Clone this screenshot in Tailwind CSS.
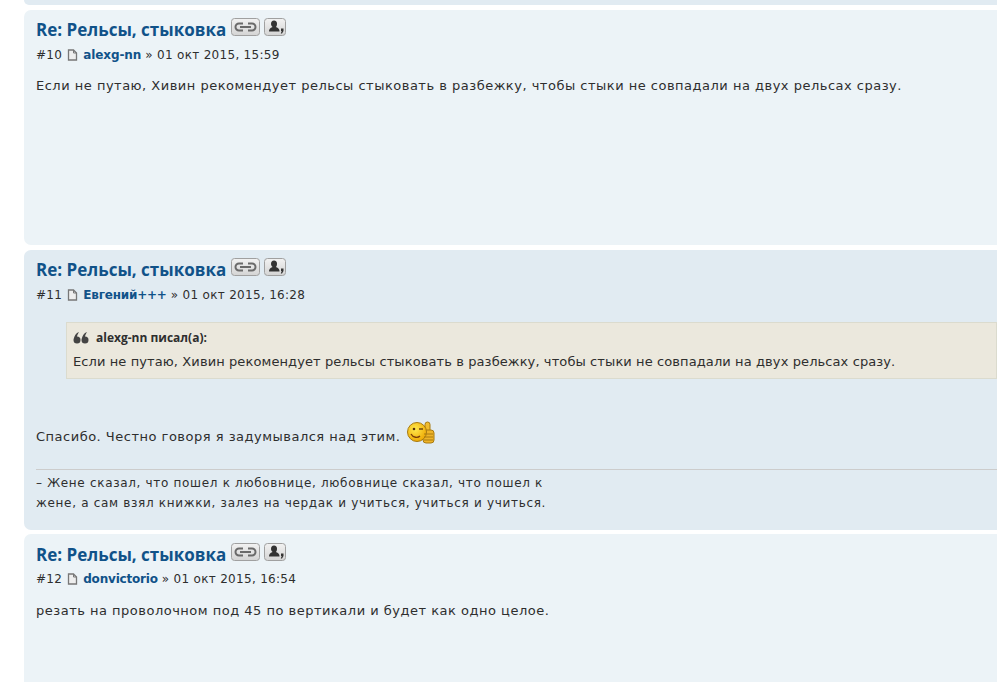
<!DOCTYPE html>
<html><head><meta charset="utf-8">
<script src="https://cdn.jsdelivr.net/npm/@tailwindcss/browser@4"></script>
</head>
<body class="bg-white overflow-hidden">
<div class="w-[997px] h-[682px] overflow-hidden pl-6 flex flex-col gap-[5px] font-['DejaVu_Sans',sans-serif] text-[#2e2e2e]">
  <div class="h-[5px] shrink-0 bg-[#e1ebf2] rounded-bl-[7px]"></div>

  <article class="h-[235px] shrink-0 bg-[#ecf3f7] rounded-l-[7px] pl-3 pt-[9px]">
    <div class="flex items-start h-[22px]">
      <h3 class="font-['Open_Sans',sans-serif] font-bold text-[17px] leading-[22px] text-[#105289]">Re: Рельсы, стыковка</h3>
      <svg class="ml-[5px] -mt-[1px]" width="29" height="18" viewBox="0 0 29 18"><defs><linearGradient id="g" x1="0" y1="0" x2="0" y2="1"><stop offset="0" stop-color="#f2f2f2"/><stop offset="1" stop-color="#d4d4d4"/></linearGradient></defs><rect x=".5" y=".5" width="28" height="17" rx="3" fill="url(#g)" stroke="#a0a0a0"/><g fill="none" stroke="#6a6a6a" stroke-width="2"><path d="M12 5.500H8a3.500 3.500 0 0 0 0 7h4M17 5.500h4a3.500 3.500 0 0 1 0 7h-4M9 9h11"/></g></svg>
      <svg class="ml-[4px] -mt-[1px]" width="22" height="18" viewBox="0 0 22 18"><rect x=".5" y=".5" width="21" height="17" rx="3" fill="url(#g)" stroke="#a0a0a0"/><path d="M10 2.500a3 3 0 0 1 3 3.500c0 1.500-.7 2.500-1 3 1 .8 3.500 1 3.500 4.500H5c0-3.500 2.500-3.700 3.500-4.500-.3-.5-1.500-1.500-1.500-3a3 3.500 0 0 1 3-3.500z" fill="#333"/><path d="M17 10.500h2.500v2.500l-1.500 2.500h-1.200l.9-2.500H17z" fill="#333"/></svg>
    </div>
    <div class="mt-[5px] text-[12px] leading-[18px] flex items-center whitespace-pre tracking-[0.3px]">#10<svg class="ml-[5px] mr-[5px]" width="11" height="12" viewBox="0 0 11 12"><path d="M1.500 1h5l3 3v7h-8z" fill="#eee" stroke="#777" stroke-width="1.300"/><path d="M6.500 1v3h3" fill="none" stroke="#777"/></svg><a class="font-bold text-[#105289] tracking-[-0.1px]">alexg-nn</a> » 01 окт 2015, 15:59</div>
    <p class="mt-[11px] text-[13px] leading-[22px] tracking-[0.5px]">Если не путаю, Хивин рекомендует рельсы стыковать в разбежку, чтобы стыки не совпадали на двух рельсах сразу.</p>
  </article>

  <article class="h-[280px] shrink-0 bg-[#e1ebf2] rounded-l-[7px] pl-3 pt-[9px]">
    <div class="flex items-start h-[22px]">
      <h3 class="font-['Open_Sans',sans-serif] font-bold text-[17px] leading-[22px] text-[#105289]">Re: Рельсы, стыковка</h3>
      <svg class="ml-[5px] -mt-[1px]" width="29" height="18" viewBox="0 0 29 18"><rect x=".5" y=".5" width="28" height="17" rx="3" fill="url(#g)" stroke="#a0a0a0"/><g fill="none" stroke="#6a6a6a" stroke-width="2"><path d="M12 5.500H8a3.500 3.500 0 0 0 0 7h4M17 5.500h4a3.500 3.500 0 0 1 0 7h-4M9 9h11"/></g></svg>
      <svg class="ml-[4px] -mt-[1px]" width="22" height="18" viewBox="0 0 22 18"><rect x=".5" y=".5" width="21" height="17" rx="3" fill="url(#g)" stroke="#a0a0a0"/><path d="M10 2.500a3 3 0 0 1 3 3.500c0 1.500-.7 2.500-1 3 1 .8 3.500 1 3.500 4.500H5c0-3.500 2.500-3.700 3.500-4.500-.3-.5-1.500-1.500-1.500-3a3 3.500 0 0 1 3-3.500z" fill="#333"/><path d="M17 10.500h2.500v2.500l-1.500 2.500h-1.200l.9-2.500H17z" fill="#333"/></svg>
    </div>
    <div class="mt-[5px] text-[12px] leading-[18px] flex items-center whitespace-pre tracking-[0.3px]">#11<svg class="ml-[5px] mr-[5px]" width="11" height="12" viewBox="0 0 11 12"><path d="M1.500 1h5l3 3v7h-8z" fill="#eee" stroke="#777" stroke-width="1.300"/><path d="M6.500 1v3h3" fill="none" stroke="#777"/></svg><a class="font-bold text-[#105289] tracking-[-0.2px]">Евгений+++</a> » 01 окт 2015, 16:28</div>
    <blockquote class="mt-[18px] ml-[30px] h-[57px] bg-[#ebe8dd] border border-[#dbdbce] pl-[6px]">
      <div class="flex items-center h-[26px] pt-[3px]">
        <svg width="17" height="12" viewBox="0 0 17 12" fill="#444"><circle cx="4" cy="8" r="3.500"/><path d="M1 7c0-3 2-6 5-7-1 2-2 3-2 5z"/><circle cx="12" cy="8" r="3.500"/><path d="M9 7c0-3 2-6 5-7-1 2-2 3-2 5z"/></svg>
        <span class="ml-[6px] font-['Open_Sans',sans-serif] font-bold text-[12px]">alexg-nn писал(а):</span>
      </div>
      <p class="mt-[2px] text-[13px] leading-[22px] tracking-[0.1px]">Если не путаю, Хивин рекомендует рельсы стыковать в разбежку, чтобы стыки не совпадали на двух рельсах сразу.</p>
    </blockquote>
    <div class="mt-[43px] h-[26px] flex items-end">
      <p class="text-[13px] leading-[22px] tracking-[0.5px]">Спасибо. Честно говоря я задумывался над этим.</p>
      <svg class="ml-[5px] mb-[3px]" width="30" height="24" viewBox="0 0 30 24"><defs><radialGradient id="s" cx=".4" cy=".35" r=".7"><stop offset="0" stop-color="#ffe94d"/><stop offset="1" stop-color="#eda500"/></radialGradient></defs><rect x="19" y="1" width="5" height="12" rx="2.500" fill="#f0bc2e" stroke="#a87a10"/><rect x="17" y="9" width="11" height="13" rx="3" fill="#efb428" stroke="#a87a10"/><circle cx="11" cy="11" r="9.500" fill="url(#s)" stroke="#a87a10"/><path d="M5 13c2 4 7 4 9 2" fill="none" stroke="#7a3c08" stroke-width="1.300"/><circle cx="8" cy="8" r="1.300" fill="#5a3008"/><path d="M13 8h4" stroke="#5a3008" stroke-width="1.300"/><path d="M18 13h9M18 16h9M18 19h9" stroke="#a87a10"/></svg>
    </div>
    <div class="mt-[21px] border-t border-[#ccc] pt-[3px]">
      <p class="text-[12px] leading-[20px] tracking-[0.68px] w-[540px]">– Жене сказал, что пошел к любовнице, любовнице сказал, что пошел к жене, а сам взял книжки, залез на чердак и учиться, учиться и учиться.</p>
    </div>
  </article>

  <article class="h-[200px] shrink-0 bg-[#ecf3f7] rounded-l-[7px] -mt-px pl-3 pt-[9px]">
    <div class="flex items-start h-[22px] pt-px">
      <h3 class="font-['Open_Sans',sans-serif] font-bold text-[17px] leading-[22px] text-[#105289]">Re: Рельсы, стыковка</h3>
      <svg class="ml-[5px] -mt-[1px]" width="29" height="18" viewBox="0 0 29 18"><rect x=".5" y=".5" width="28" height="17" rx="3" fill="url(#g)" stroke="#a0a0a0"/><g fill="none" stroke="#6a6a6a" stroke-width="2"><path d="M12 5.500H8a3.500 3.500 0 0 0 0 7h4M17 5.500h4a3.500 3.500 0 0 1 0 7h-4M9 9h11"/></g></svg>
      <svg class="ml-[4px] -mt-[1px]" width="22" height="18" viewBox="0 0 22 18"><rect x=".5" y=".5" width="21" height="17" rx="3" fill="url(#g)" stroke="#a0a0a0"/><path d="M10 2.500a3 3 0 0 1 3 3.500c0 1.500-.7 2.500-1 3 1 .8 3.500 1 3.500 4.500H5c0-3.500 2.500-3.700 3.500-4.500-.3-.5-1.500-1.500-1.500-3a3 3.500 0 0 1 3-3.500z" fill="#333"/><path d="M17 10.500h2.500v2.500l-1.500 2.500h-1.200l.9-2.500H17z" fill="#333"/></svg>
    </div>
    <div class="mt-[5px] text-[12px] leading-[18px] flex items-center whitespace-pre tracking-[0.3px]">#12<svg class="ml-[5px] mr-[5px]" width="11" height="12" viewBox="0 0 11 12"><path d="M1.500 1h5l3 3v7h-8z" fill="#eee" stroke="#777" stroke-width="1.300"/><path d="M6.500 1v3h3" fill="none" stroke="#777"/></svg><a class="font-bold text-[#105289] tracking-[-0.2px]">donvictorio</a> » 01 окт 2015, 16:54</div>
    <p class="mt-[12px] text-[13px] leading-[22px] tracking-[0.5px]">резать на проволочном под 45 по вертикали и будет как одно целое.</p>
  </article>
</div>
</body></html>
